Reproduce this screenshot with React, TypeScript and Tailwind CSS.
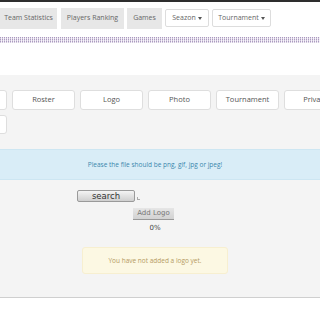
import React from "react";

const tabs = [
  { label: "Team Statistics", w: "w-[57px]", gap: "mr-[4px]" },
  { label: "Players Ranking", w: "w-[63px]", gap: "mr-[3px]" },
  { label: "Games", w: "w-[35px]", gap: "mr-[3px]" },
];

// first button sits off the left edge, its label isn't visible
const sections = ["", "Roster", "Logo", "Photo", "Tournament", "Privacy"];

function Caret() {
  return <span className="ml-[2px] inline-block border-x-[2.5px] border-t-[3px] border-x-transparent border-t-[#555] align-middle" />;
}

export default function App() {
  return (
    <div className="w-[320px] h-[320px] overflow-hidden bg-white font-['Open_Sans',sans-serif] text-[#555]">
      <div className="h-[2px] bg-[#2e2e2e]" />

      {/* top menu */}
      <div className="flex items-start h-[35px] pt-[6px]">
        {tabs.map((t) => (
          <div
            key={t.label}
            className={`${t.w} ${t.gap} h-[21px] bg-[#e7e7e7] flex items-center justify-center text-[7px] text-[#666]`}
          >
            {t.label}
          </div>
        ))}
        <div className="w-[44px] mr-[3px] mt-[1px] h-[18px] bg-white border border-[#ddd] rounded-[2px] flex items-center justify-center text-[7px] text-[#666]">
          Seazon <Caret />
        </div>
        <div className="w-[59px] mt-[1px] h-[18px] bg-white border border-[#ddd] rounded-[2px] flex items-center justify-center text-[7px] text-[#666]">
          Tournament
          <Caret />
        </div>
      </div>

      <div className="h-[6px] bg-[image:repeating-linear-gradient(0deg,rgba(255,255,255,0.45)_0_1px,transparent_1px_2px),repeating-linear-gradient(90deg,#ac9bc0_0_1px,#f2eef6_1px_2px)]" />

      <div className="h-[32px]" />

      {/* panel */}
      <div className="h-[223px] bg-[#f4f4f4] border-b border-[#cfcfcf] pt-[15px] flex flex-col">
        <div className="overflow-hidden">
          <div className="ml-[-56px] flex flex-wrap gap-[5px] w-[412px]">
            {sections.map((s, i) => (
              <div
                key={i}
                className="w-[63px] h-[20px] shrink-0 bg-white border border-[#dedede] rounded-[3px] flex items-center justify-center text-[7.5px] text-[#555] whitespace-nowrap"
              >
                {s}
              </div>
            ))}
            <div className="w-[63px] h-[19px] bg-white border border-[#dedede] rounded-[3px]" />
          </div>
        </div>

        <div className="mt-[15px] h-[31px] bg-[#d9edf7] border-y border-[#cde6f2] flex items-center justify-center pr-[10px] text-[6.5px] text-[#3a87ad]">
          Please the file should be png, gif, jpg or jpeg!
        </div>

        <div className="mt-[10px] flex items-center pl-[77px]">
          <div className="w-[58px] h-[12px] bg-gradient-to-b from-[#f4f4f4] to-[#cfcfcf] border border-[#9a9a9a] rounded-[2px] flex items-center justify-center font-['DejaVu_Sans',sans-serif] text-[8.5px] text-[#333]">
            search
          </div>
          <div className="ml-[2px] mt-[4px] w-[3px] h-[3px] border-l border-b border-[#aaa]" />
        </div>

        <div className="mt-[6px] ml-[133px] w-[41px] h-[12px] bg-gradient-to-b from-[#e6e6e6] to-[#d2d2d2] border-b border-[#999] flex items-center justify-center font-['DejaVu_Sans',sans-serif] text-[7px] text-[#777]">
          Add Logo
        </div>

        <div className="mt-[3px] ml-[133px] w-[44px] text-center font-['DejaVu_Sans',sans-serif] text-[7px] text-[#444] leading-[10px]">
          0%
        </div>

        <div className="mt-[14px] ml-[82px] w-[146px] h-[27px] bg-[#fcf8e3] border border-[#f7efd0] rounded-[3px] flex items-center justify-center text-[6.5px] text-[#b59a62]">
          You have not added a logo yet.
        </div>
      </div>
    </div>
  );
}
